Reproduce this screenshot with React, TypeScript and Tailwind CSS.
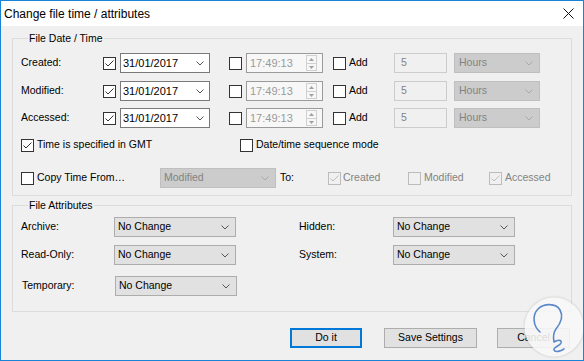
import React from "react";

const Check = ({ color }: { color: string }) => (
  <svg className="absolute left-0 top-0" width="11" height="11" viewBox="0 0 11 11">
    <polyline points="1.5,5.5 4,8 9.5,2.5" fill="none" stroke={color} strokeWidth="1" />
  </svg>
);

function Box({ checked = false, disabled = false }: { checked?: boolean; disabled?: boolean }) {
  return (
    <span
      className={
        disabled
          ? "relative flex-none w-[13px] h-[13px] border border-[#bcbcbc] bg-[#f0f0f0]"
          : "relative flex-none w-[13px] h-[13px] border border-[#333333] bg-white"
      }
    >
      {checked && <Check color={disabled ? "#bcbcbc" : "#333333"} />}
    </span>
  );
}

const Chevron = ({ color }: { color: string }) => (
  <svg width="8" height="5" viewBox="0 0 8 5" className="flex-none">
    <polyline points="0.5,0.5 4,4 7.5,0.5" fill="none" stroke={color} strokeWidth="1" />
  </svg>
);

function DateCombo() {
  return (
    <div className="flex-none ml-[4px] w-[90px] h-[20px] border border-[#7a7a7a] bg-white flex items-center pl-[2px] pr-[5px] justify-between">
      <span className="text-[11px]">31/01/2017</span>
      <Chevron color="#555555" />
    </div>
  );
}

function TimeField() {
  return (
    <div className="flex-none ml-[4px] w-[77px] h-[20px] border border-[#9a9a9a] bg-[#f7f7f7] flex items-center pl-[3px] pr-[5px] justify-between">
      <span className="text-[11px] text-[#9a9a9a]">17:49:13</span>
      <div className="w-[11px] h-[16px] border border-[#d0d0d0] flex flex-col items-center justify-center gap-[2px]">
        <svg width="5" height="3" viewBox="0 0 5 3">
          <polygon points="0,3 2.5,0 5,3" fill="#a0a0a0" />
        </svg>
        <div className="w-[9px] h-px bg-[#d0d0d0]" />
        <svg width="5" height="3" viewBox="0 0 5 3">
          <polygon points="0,0 2.5,3 5,0" fill="#a0a0a0" />
        </svg>
      </div>
    </div>
  );
}

function DateRow({ label, mt }: { label: string; mt: string }) {
  return (
    <div className={"flex items-center h-[20px] " + mt}>
      <span className="w-[82px] flex-none">{label}</span>
      <Box checked />
      <DateCombo />
      <span className="ml-[19px] flex"><Box /></span>
      <TimeField />
      <div className="ml-[10px] w-[61px] flex-none flex items-center">
        <Box />
        <span className="ml-[3px]">Add</span>
      </div>
      <div className="flex-none w-[53px] h-[20px] border border-[#cccccc] bg-[#f0f0f0] flex items-center pl-[6px] text-[#838383]">
        5
      </div>
      <div className="flex-none ml-[7px] w-[86px] h-[20px] border border-[#bfbfbf] bg-[#cccccc] flex items-center justify-between pl-[4px] pr-[6px] text-[#838383]">
        <span>Hours</span>
        <Chevron color="#a8a8a8" />
      </div>
    </div>
  );
}

function AttrCombo() {
  return (
    <div className="flex-none w-[122px] h-[20px] border border-[#adadad] bg-[#e1e1e1] flex items-center justify-between pl-[3px] pr-[6px]">
      <span>No Change</span>
      <Chevron color="#555555" />
    </div>
  );
}

function Watermark() {
  return (
    <svg className="absolute left-[522px] top-[294px]" width="62" height="64" viewBox="0 0 62 64">
      <defs>
        <filter id="sh" x="-20%" y="-20%" width="140%" height="140%">
          <feGaussianBlur stdDeviation="1.2" />
        </filter>
      </defs>
      <circle cx="31" cy="32" r="30" fill="#9a9a9a" opacity="0.35" filter="url(#sh)" />
      <circle cx="31" cy="32" r="29.5" fill="#ffffff" opacity="0.82" />
      <path
        d="M17 37 C 10 31, 9 20, 15 14 C 21 8, 33 8, 37 15 C 41 22, 37 29, 33 34 C 30 38, 30 42, 31 47 C 34 45, 39 44, 38 48 C 37 51, 30 52, 31 55 C 32 58, 38 56, 41 54"
        fill="none"
        stroke="#5b88c8"
        strokeWidth="1.6"
        strokeLinecap="round"
        strokeLinejoin="round"
      />
    </svg>
  );
}

export default function App() {
  return (
    <div className="relative w-[584px] h-[361px] border border-[#1883d7] bg-[#f0f0f0] flex flex-col text-[10.5px] text-black font-['Liberation_Sans',Arial,sans-serif] overflow-hidden">
      <div className="h-[25px] bg-white flex items-center justify-between pl-[3px] pr-[9px] flex-none">
        <span className="text-[12px]">Change file time / attributes</span>
        <svg width="11" height="11" viewBox="0 0 11 11">
          <path d="M0.5 0.5 L10.5 10.5 M10.5 0.5 L0.5 10.5" stroke="#111111" strokeWidth="1" />
        </svg>
      </div>
      <div className="px-[11px] flex flex-col">
        <fieldset className="mt-[5px] border border-[#dcdcdc] pl-[8px] pb-[7px]">
          <legend className="ml-[7px] px-px leading-[14px]">File Date / Time</legend>
          <DateRow label="Created:" mt="mt-[8px]" />
          <DateRow label="Modified:" mt="mt-[8px]" />
          <DateRow label="Accessed:" mt="mt-[7px]" />
          <div className="flex items-center h-[14px] mt-[10px]">
            <div className="w-[219px] flex-none flex items-center">
              <Box checked />
              <span className="ml-[3px]">Time is specified in GMT</span>
            </div>
            <Box />
            <span className="ml-[3px]">Date/time sequence mode</span>
          </div>
          <div className="flex items-center h-[20px] mt-[16px]">
            <div className="w-[139px] flex-none flex items-center">
              <Box />
              <span className="ml-[3px]">Copy Time From…</span>
            </div>
            <div className="flex-none w-[116px] h-[20px] border border-[#bfbfbf] bg-[#cccccc] flex items-center justify-between pl-[3px] pr-[6px] text-[#838383]">
              <span>Modified</span>
              <Chevron color="#a8a8a8" />
            </div>
            <span className="ml-[4px] w-[48px] flex-none">To:</span>
            <div className="w-[80px] flex-none flex items-center text-[#838383]">
              <Box checked disabled />
              <span className="ml-[2px]">Created</span>
            </div>
            <div className="w-[81px] flex-none flex items-center text-[#838383]">
              <Box disabled />
              <span className="ml-[3px]">Modified</span>
            </div>
            <div className="flex items-center text-[#838383]">
              <Box checked disabled />
              <span className="ml-[3px]">Accessed</span>
            </div>
          </div>
        </fieldset>
        <fieldset className="mt-[2px] border border-[#dcdcdc] pl-[8px] pb-[15px]">
          <legend className="ml-[7px] px-px leading-[14px]">File Attributes</legend>
          <div className="flex items-center h-[20px] mt-[5px]">
            <span className="w-[93px] flex-none">Archive:</span>
            <AttrCombo />
            <span className="ml-[63px] w-[94px] flex-none">Hidden:</span>
            <AttrCombo />
          </div>
          <div className="flex items-center h-[20px] mt-[8px]">
            <span className="w-[93px] flex-none">Read-Only:</span>
            <AttrCombo />
            <span className="ml-[63px] w-[94px] flex-none">System:</span>
            <AttrCombo />
          </div>
          <div className="flex items-center h-[20px] mt-[11px] pl-px">
            <span className="w-[93px] flex-none">Temporary:</span>
            <AttrCombo />
          </div>
        </fieldset>
      </div>
      <div className="flex justify-end items-center mt-[16px] pr-[13px] gap-[20px]">
        <div className="w-[72px] h-[20px] border-2 border-[#0078d7] bg-[#e1e1e1] flex items-center justify-center">
          Do it
        </div>
        <div className="w-[93px] h-[20px] border border-[#adadad] bg-[#e1e1e1] flex items-center justify-center ml-[2px]">
          Save Settings
        </div>
        <div className="w-[73px] h-[20px] border border-[#adadad] bg-[#e1e1e1] flex items-center justify-center">
          Cancel
        </div>
      </div>
      <Watermark />
    </div>
  );
}
